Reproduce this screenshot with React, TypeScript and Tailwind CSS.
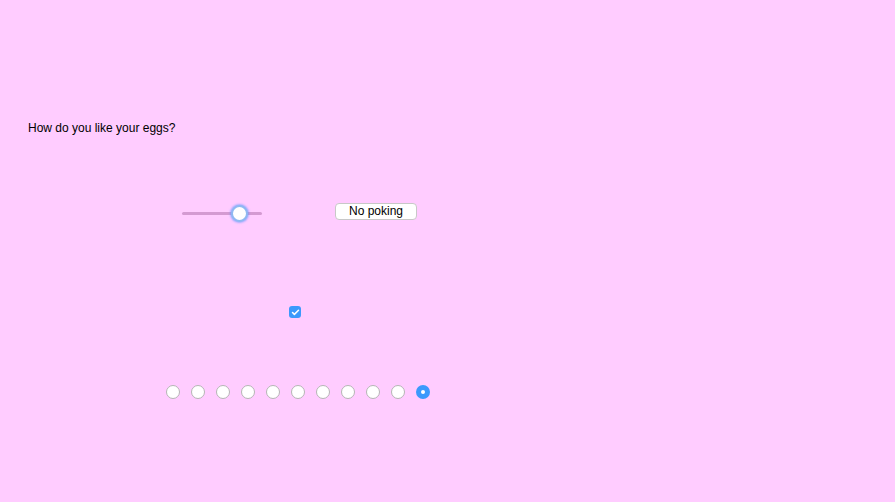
import { Check } from "lucide-react";

const radios = Array.from({ length: 11 }, (_, i) => i);

const App = () => {
  return (
    <main
      className="w-[895px] h-[502px] bg-[#ffccff] overflow-hidden text-black"
      style={{ fontFamily: '"Liberation Sans", Arial, sans-serif' }}
    >
      <p className="pt-[121px] pl-[28px] text-[12px] leading-[15px]">
        How do you like your eggs?
      </p>

      <div className="flex items-start mt-[66px] h-[18px]">
        <div className="relative ml-[182px] mt-[2px] w-[80px] h-[18px] flex items-center">
          <div className="w-full h-[3px] rounded-full bg-[#d49ad2]" />
          <div className="absolute left-[49px] top-[1px] w-[17px] h-[17px] rounded-full bg-white border-[2px] border-[#8fb8f2] shadow-[0_0_2px_1px_rgba(90,150,255,0.6)]" />
        </div>
        <button className="ml-[73px] mt-[1px] w-[82px] h-[17px] rounded-[4px] bg-white border border-[#c8c8c8] text-[12px] leading-[15px] text-center">
          No poking
        </button>
      </div>

      <div className="mt-[86px] pl-[289px]">
        <span className="flex items-center justify-center w-[12px] h-[12px] rounded-[3px] bg-[#3b99fc]">
          <Check size={9} strokeWidth={4} className="text-white" />
        </span>
      </div>

      <div className="flex gap-[11px] mt-[67px] pl-[166px]">
        {radios.map((i) =>
          i === 10 ? (
            <span
              key={i}
              className="flex items-center justify-center w-[14px] h-[14px] rounded-full bg-[#3b99fc]"
            >
              <span className="w-[4px] h-[4px] rounded-full bg-white" />
            </span>
          ) : (
            <span
              key={i}
              className="w-[14px] h-[14px] rounded-full bg-white border border-[#b5b5b5]"
            />
          )
        )}
      </div>
    </main>
  );
};

export default App;
